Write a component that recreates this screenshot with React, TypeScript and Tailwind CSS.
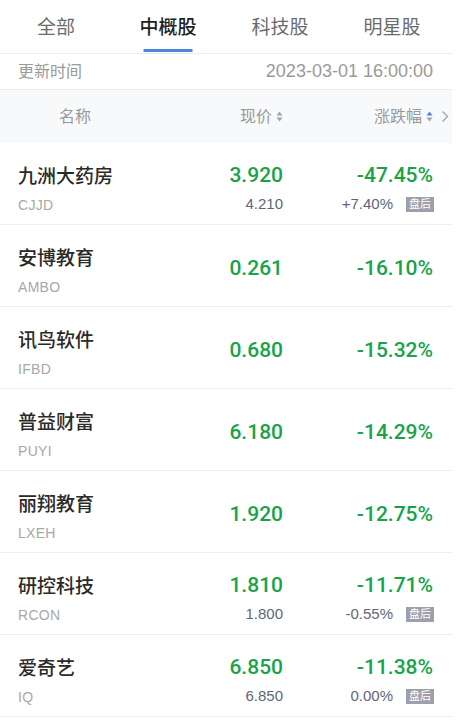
import React from 'react';

interface Stock {
  name: string;
  code: string;
  price: string;
  pct: string;
  afterPrice?: string;
  afterPct?: string;
}

const stocks: Stock[] = [
  { name: '九洲大药房', code: 'CJJD', price: '3.920', pct: '-47.45%', afterPrice: '4.210', afterPct: '+7.40%' },
  { name: '安博教育', code: 'AMBO', price: '0.261', pct: '-16.10%' },
  { name: '讯鸟软件', code: 'IFBD', price: '0.680', pct: '-15.32%' },
  { name: '普益财富', code: 'PUYI', price: '6.180', pct: '-14.29%' },
  { name: '丽翔教育', code: 'LXEH', price: '1.920', pct: '-12.75%' },
  { name: '研控科技', code: 'RCON', price: '1.810', pct: '-11.71%', afterPrice: '1.800', afterPct: '-0.55%' },
  { name: '爱奇艺', code: 'IQ', price: '6.850', pct: '-11.38%', afterPrice: '6.850', afterPct: '0.00%' },
];

const tabs = ['全部', '中概股', '科技股', '明星股'];

const font = { fontFamily: '"Liberation Sans", "Noto Sans CJK SC", sans-serif' };
const numFont = { fontFamily: 'Roboto, "Liberation Sans", sans-serif' };

// 排序小三角
function SortArrows({ activeUp = false }: { activeUp?: boolean }) {
  return (
    <svg width="7" height="11" viewBox="0 0 7 11" className="ml-[4px]">
      <path d="M3.5 0.5 L6.5 4.5 L0.5 4.5 Z" fill={activeUp ? '#4a86e0' : '#a0a4ab'} />
      <path d="M3.5 10.5 L6.5 6.5 L0.5 6.5 Z" fill="#a0a4ab" />
    </svg>
  );
}

export default function App() {
  return (
    <div className="w-[461px] min-h-[720px] bg-white" style={font}>
      <div className="w-[452px]">
        {/* 标签 */}
        <div className="grid grid-cols-4 h-[54px] pr-[4px] border-b border-[#ececec]">
          {tabs.map((t, i) => (
            <div key={t} className="relative flex items-center justify-center pt-[3px]">
              <span
                className={
                  i === 1
                    ? 'text-[19px] text-[#222222] font-medium'
                    : 'text-[19px] text-[#6b6b6b]'
                }
              >
                {t}
              </span>
              {i === 1 && (
                <div className="absolute bottom-[1px] left-1/2 -translate-x-1/2 w-[49px] h-[3px] bg-[#4a86e0]" />
              )}
            </div>
          ))}
        </div>

        {/* 更新时间 */}
        <div className="flex items-center justify-between h-[36px] pl-[18px] pr-[19px] border-b border-[#ececec]">
          <span className="text-[16px] text-[#9a9a9a]">更新时间</span>
          <span className="text-[18px] text-[#9a9a9a]">2023-03-01 16:00:00</span>
        </div>

        {/* 表头 */}
        <div className="flex items-center h-[53px] bg-[#f8f9fb] text-[16px] text-[#999999]">
          <div className="w-[150px] text-center">名称</div>
          <div className="w-[133px] flex items-center justify-end">
            现价
            <SortArrows />
          </div>
          <div className="flex-1 flex items-center justify-end pr-[3px]">
            涨跌幅
            <SortArrows activeUp />
            <svg width="8" height="13" viewBox="0 0 8 13" className="ml-[8px]">
              <path d="M1.5 1.5 L6.5 6.5 L1.5 11.5" fill="none" stroke="#a0a4ab" strokeWidth="1.3" />
            </svg>
          </div>
        </div>

        {/* 列表 */}
        {stocks.map((s) => (
          <div key={s.code} className="flex h-[82px] border-b border-[#eeeeee] pr-[19px]">
            <div className="flex-1 pl-[18px] pt-[22px] flex flex-col">
              <span className="text-[19px] leading-[24px] text-[#2a2a2a] font-medium">{s.name}</span>
              <span className="mt-[7px] text-[14px] leading-[18px] text-[#a8a8a8] tracking-[0.3px]">{s.code}</span>
            </div>
            {s.afterPrice ? (
              <>
                <div className="w-[120px] pt-[19px] flex flex-col items-end">
                  <span className="text-[21px] leading-[26px] text-[#18a34a] font-medium" style={numFont}>{s.price}</span>
                  <span className="mt-[7px] text-[15px] leading-[18px] text-[#5f6679]">{s.afterPrice}</span>
                </div>
                <div className="w-[150px] pt-[19px] flex flex-col items-end">
                  <span className="text-[21px] leading-[26px] text-[#18a34a] font-medium" style={numFont}>{s.pct}</span>
                  <div className="mt-[7px] flex items-center h-[18px]">
                    <span className="text-[15px] leading-[18px] text-[#5f6679]">{s.afterPct}</span>
                    <span className="ml-[13px] mr-[-1px] h-[15px] px-[3px] bg-[#9da0aa] text-white text-[11px] leading-[15px]">盘后</span>
                  </div>
                </div>
              </>
            ) : (
              <>
                <div className="w-[120px] pt-[30px] flex flex-col items-end">
                  <span className="text-[21px] leading-[26px] text-[#18a34a] font-medium" style={numFont}>{s.price}</span>
                </div>
                <div className="w-[150px] pt-[30px] flex flex-col items-end">
                  <span className="text-[21px] leading-[26px] text-[#18a34a] font-medium" style={numFont}>{s.pct}</span>
                </div>
              </>
            )}
          </div>
        ))}
      </div>
    </div>
  );
}
